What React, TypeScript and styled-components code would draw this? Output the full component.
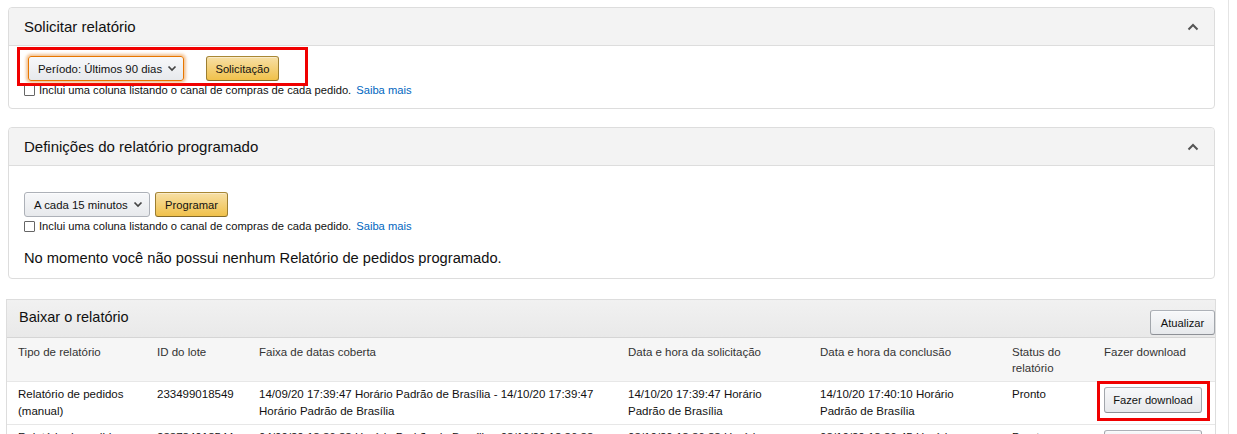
import * as React from "react";
import styled, { createGlobalStyle } from "styled-components";

const GlobalStyle = createGlobalStyle`
  html, body {
    margin: 0;
    padding: 0;
    background: #fff;
    overflow: hidden;
  }
  body {
    font-family: "Liberation Sans", Arial, sans-serif;
    color: #111;
  }
`;

const linkColor = "#0066c0";
const borderColor = "#dddddd";

const Page = styled.div`
  display: flex;
  flex-flow: row nowrap;
  width: 1237px;
  height: 434px;
  overflow: hidden;
`;

const Main = styled.div`
  width: 1207px;
  margin-left: 8px;
  padding-top: 7px;
  display: flex;
  flex-flow: column nowrap;
`;

const Rail = styled.div`
  margin-left: 13px;
  flex: 1;
  border-left: 1px solid #e4e4e4;
`;

const Panel = styled.section<{ $gap?: number }>`
  border: 1px solid ${borderColor};
  border-radius: 4px;
  background: #fff;
  margin-bottom: ${(p) => p.$gap || 0}px;
`;

const PanelHeader = styled.div`
  height: 37px;
  display: flex;
  align-items: center;
  justify-content: space-between;
  padding: 0 15px 0 15px;
  background: #f3f3f3;
  border-bottom: 1px solid ${borderColor};
  border-radius: 4px 4px 0 0;
`;

const PanelTitle = styled.h3`
  margin: 0;
  font-size: 15px;
  font-weight: 400;
  color: #111;
`;

const PanelBody = styled.div<{ $pad: string }>`
  padding: ${(p) => p.$pad};
`;

const Highlight = styled.div`
  position: relative;
  z-index: 1;
  display: flex;
  flex-flow: row nowrap;
  align-items: flex-start;
  gap: 22px;
  box-sizing: border-box;
  width: 291px;
  height: 39px;
  margin-left: -7px;
  padding: 6px 0 0 8px;
  border: 3px solid #f00000;
`;

const Controls = styled.div`
  display: flex;
  flex-flow: row nowrap;
  align-items: center;
  gap: 5px;
`;

const Select = styled.div<{ $width: number; $focus?: boolean }>`
  width: ${(p) => p.$width}px;
  height: 25px;
  box-sizing: border-box;
  display: flex;
  align-items: center;
  justify-content: space-between;
  padding: 0 6px 0 9px;
  font-size: 11.4px;
  color: #111;
  background: linear-gradient(to bottom, #f7f8fa, #e7e9ec);
  border: 1px solid ${(p) => (p.$focus ? "#e77600" : "#adb1b8")};
  border-radius: 3px;
  box-shadow: ${(p) =>
    p.$focus
      ? "0 0 3px 2px rgba(228, 121, 17, 0.45)"
      : "0 1px 0 rgba(255, 255, 255, 0.6) inset"};
  cursor: pointer;
`;

const Button = styled.button<{ $width: number; $primary?: boolean; $height?: number }>`
  width: ${(p) => p.$width}px;
  height: ${(p) => p.$height || 25}px;
  padding: 0;
  font-family: inherit;
  font-size: 11.2px;
  color: #111;
  border: 1px solid;
  border-radius: 3px;
  cursor: pointer;
  background: ${(p) =>
    p.$primary
      ? "linear-gradient(to bottom, #f7dfa5, #f0c14b)"
      : "linear-gradient(to bottom, #f7f8fa, #e7e9ec)"};
  border-color: ${(p) =>
    p.$primary ? "#a88734 #9c7e31 #846a29" : "#adb1b8 #a2a6ac #8d9096"};
  box-shadow: 0 1px 0 rgba(255, 255, 255, 0.4) inset;
`;

const CheckRow = styled.label<{ $top?: number }>`
  display: flex;
  align-items: center;
  gap: 4px;
  margin-top: ${(p) => p.$top || 0}px;
  font-size: 11.2px;
  color: #111;
  line-height: 13px;
`;

const Box = styled.span`
  width: 9px;
  height: 9px;
  border: 1px solid #666;
  border-radius: 1px;
  background: #fff;
  flex: none;
`;

const Link = styled.a`
  color: ${linkColor};
  text-decoration: none;
  margin-left: 5px;
`;

const EmptyNote = styled.p`
  margin: 17px 0 0;
  font-size: 14.7px;
  color: #111;
`;

const DownloadPanel = styled.section`
  border: 1px solid ${borderColor};
  border-bottom: none;
  margin-top: 20px;
  margin-left: -2px;
  width: 1210px;
  box-sizing: border-box;
`;

const DownloadHeader = styled.div`
  height: 38px;
  display: flex;
  align-items: flex-end;
  justify-content: space-between;
  padding: 0 0 2px 12px;
  box-sizing: border-box;
  background: linear-gradient(to bottom, #f1f1f1, #e9e9e9);
  border-bottom: 1px solid #d5d5d5;
`;

const DownloadTitle = styled.h3`
  margin: 0 0 10px;
  font-size: 14.5px;
  font-weight: 400;
  color: #111;
`;

const Table = styled.table`
  width: 100%;
  border-collapse: collapse;
  table-layout: fixed;
  font-size: 11.5px;
`;

const Col = styled.col<{ $w?: number }>`
  width: ${(p) => (p.$w ? p.$w + "px" : "auto")};
`;

const Th = styled.th`
  text-align: left;
  vertical-align: top;
  font-weight: 400;
  color: #333;
  background: #f6f6f6;
  padding: 6px 11px 5px;
  line-height: 16px;
`;

const Td = styled.td<{ $tight?: boolean }>`
  vertical-align: top;
  color: #111;
  padding: ${(p) => (p.$tight ? "0 11px 0" : "4px 11px 4px")};
  line-height: 17px;
  border-top: 1px solid #e7e7e7;
`;

const RedFrame = styled.div`
  display: inline-block;
  margin: -1px 0 0 -7px;
  padding: 3px 5px 5px 4px;
  border: 3px solid #f00000;
`;

const BtnCell = styled.div`
  padding-top: 5px;
`;

const ChevronUp = () => (
  <svg width="12" height="8" viewBox="0 0 12 8" aria-hidden="true">
    <path d="M1.5 6.5 L6 2 L10.5 6.5" fill="none" stroke="#555" strokeWidth="2" />
  </svg>
);

const ChevronDown = () => (
  <svg width="10" height="7" viewBox="0 0 10 7" aria-hidden="true">
    <path d="M1.5 1.5 L5 5 L8.5 1.5" fill="none" stroke="#444" strokeWidth="1.7" />
  </svg>
);

interface ReportRow {
  kind: string[];
  batch: string;
  range: string[];
  requested: string[];
  done: string[];
  status: string;
  framed?: boolean;
}

const rows: ReportRow[] = [
  {
    kind: ["Relatório de pedidos", "(manual)"],
    batch: "233499018549",
    range: ["14/09/20 17:39:47 Horário Padrão de Brasília - 14/10/20 17:39:47", "Horário Padrão de Brasília"],
    requested: ["14/10/20 17:39:47 Horário", "Padrão de Brasília"],
    done: ["14/10/20 17:40:10 Horário", "Padrão de Brasília"],
    status: "Pronto",
    framed: true,
  },
  {
    kind: ["Relatório de pedidos", "(manual)"],
    batch: "233784018544",
    range: ["04/09/20 18:36:33 Horário Padrão de Brasília - 03/10/20 18:36:33", "Horário Padrão de Brasília"],
    requested: ["03/10/20 18:36:33 Horário", "Padrão de Brasília"],
    done: ["03/10/20 18:36:45 Horário", "Padrão de Brasília"],
    status: "Pronto",
  },
];

const Lines = ({ lines }: { lines: string[] }) => (
  <>
    {lines.map((l, i) => (
      <React.Fragment key={i}>
        {i > 0 && <br />}
        {l}
      </React.Fragment>
    ))}
  </>
);

export default function App() {
  return (
    <Page>
      <GlobalStyle />
      <Main>
        <Panel $gap={18}>
          <PanelHeader>
            <PanelTitle>Solicitar relatório</PanelTitle>
            <ChevronUp />
          </PanelHeader>
          <PanelBody $pad="1px 15px 11px">
            <Highlight>
              <Select $width={156} $focus>
                <span>Período: Últimos 90 dias</span>
                <ChevronDown />
              </Select>
              <Button $width={73} $primary>
                Solicitação
              </Button>
            </Highlight>
            <CheckRow $top={-2}>
              <Box />
              <span>
                Inclui uma coluna listando o canal de compras de cada pedido.
                <Link href="#">Saiba mais</Link>
              </span>
            </CheckRow>
          </PanelBody>
        </Panel>

        <Panel>
          <PanelHeader>
            <PanelTitle>Definições do relatório programado</PanelTitle>
            <ChevronUp />
          </PanelHeader>
          <PanelBody $pad="26px 15px 12px">
            <Controls>
              <Select $width={126}>
                <span>A cada 15 minutos</span>
                <ChevronDown />
              </Select>
              <Button $width={73} $primary>
                Programar
              </Button>
            </Controls>
            <CheckRow $top={3}>
              <Box />
              <span>
                Inclui uma coluna listando o canal de compras de cada pedido.
                <Link href="#">Saiba mais</Link>
              </span>
            </CheckRow>
            <EmptyNote>No momento você não possui nenhum Relatório de pedidos programado.</EmptyNote>
          </PanelBody>
        </Panel>

        <DownloadPanel>
          <DownloadHeader>
            <DownloadTitle>Baixar o relatório</DownloadTitle>
            <Button $width={65} $height={25}>
              Atualizar
            </Button>
          </DownloadHeader>
          <Table>
            <colgroup>
              <Col $w={139} />
              <Col $w={102} />
              <Col $w={369} />
              <Col $w={192} />
              <Col $w={192} />
              <Col $w={92} />
              <Col />
            </colgroup>
            <thead>
              <tr>
                <Th>Tipo de relatório</Th>
                <Th>ID do lote</Th>
                <Th>Faixa de datas coberta</Th>
                <Th>Data e hora da solicitação</Th>
                <Th>Data e hora da conclusão</Th>
                <Th>
                  Status do
                  <br />
                  relatório
                </Th>
                <Th>Fazer download</Th>
              </tr>
            </thead>
            <tbody>
              {rows.map((r) => (
                <tr key={r.batch}>
                  <Td>
                    <Lines lines={r.kind} />
                  </Td>
                  <Td>{r.batch}</Td>
                  <Td>
                    <Lines lines={r.range} />
                  </Td>
                  <Td>
                    <Lines lines={r.requested} />
                  </Td>
                  <Td>
                    <Lines lines={r.done} />
                  </Td>
                  <Td>{r.status}</Td>
                  <Td $tight>
                    {r.framed ? (
                      <RedFrame>
                        <Button $width={98} $height={26}>
                          Fazer download
                        </Button>
                      </RedFrame>
                    ) : (
                      <BtnCell>
                        <Button $width={98} $height={26}>
                          Fazer download
                        </Button>
                      </BtnCell>
                    )}
                  </Td>
                </tr>
              ))}
            </tbody>
          </Table>
        </DownloadPanel>
      </Main>
      <Rail />
    </Page>
  );
}
